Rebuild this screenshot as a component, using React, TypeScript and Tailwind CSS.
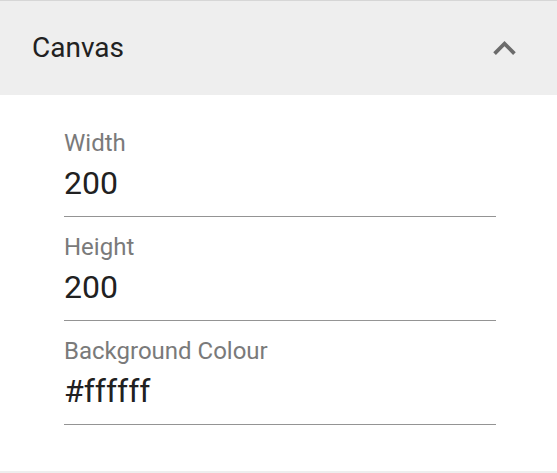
import React from 'react';

const fields = [
  { label: 'Width', value: '200' },
  { label: 'Height', value: '200' },
  { label: 'Background Colour', value: '#ffffff' },
];

const App: React.FC = () => {
  return (
    <div className="w-full min-h-[473px] bg-white font-['Roboto',sans-serif]">
      <div className="border-t border-[#d6d6d6]">
        <div className="h-[94px] bg-[#eeeeee] flex items-center justify-between pl-[32px] pr-[30px]">
          <span className="text-[28px] leading-none text-[#212121]">Canvas</span>
          <svg viewBox="0 0 24 24" className="w-[45px] h-[45px] fill-[#6b6b6b]">
            <path d="M12 8l-6 6 1.41 1.41L12 10.83l4.59 4.58L18 14z" />
          </svg>
        </div>
      </div>

      <div className="pl-16 pr-[61px] pt-[18px] pb-[46px]">
        {fields.map((f) => (
          <div key={f.label} className="pt-4 border-b border-[#949494]">
            <div className="text-[24px] leading-7 text-[#7a7a7a]">{f.label}</div>
            <div className="mt-[7px] mb-[14px] text-[32px] leading-[38px] text-[#212121]">{f.value}</div>
          </div>
        ))}
      </div>

      <div className="h-[2px] bg-[#eeeeee]" />
    </div>
  );
};

export default App;
